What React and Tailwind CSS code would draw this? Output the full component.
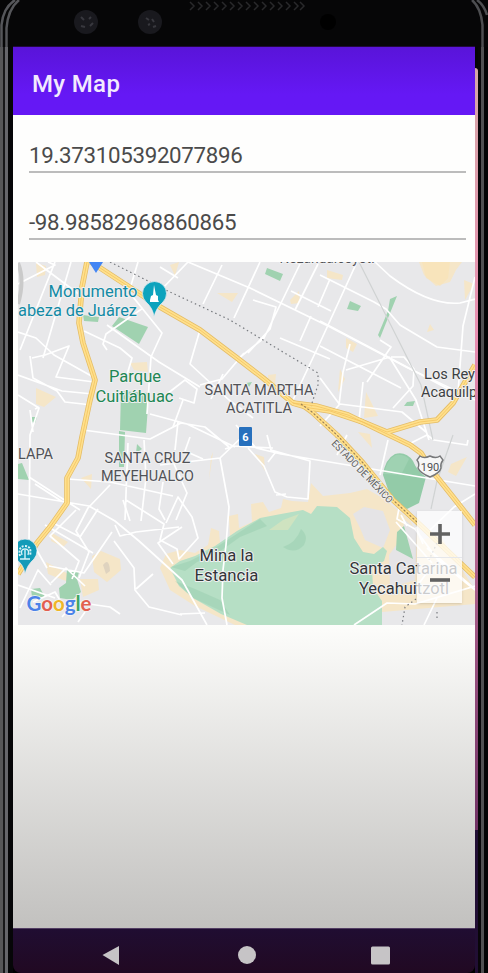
import React from "react";

const streets = [
  "M18 284L55 265L48 262M18 332L36 338L54 355L95 378M36 262L84 298M71 262L43 358M55 262L20 350M18 375L62 391L93 394M30 356L33 378L57 391L65 402L92 405M32 358L45 355L69 346L56 377L94 382",
  "M84 331L120 348L132 358L126 378M143 308L106 334L103 344L107 350M107 325L159 362L200 387M138 262L129 292L162 333L151 357L147 414M18 395L39 408L30 435L29 545M39 407L35 409M30 410L33 432",
  "M83 430L150 439L181 423L205 427L229 447M150 414L187 424L235 447M178 422L175 450M163 397L185 380L197 389L194 403L179 398",
  "M160 291L188 262M188 262L250 288L330 327L408 368L475 400M160 267L178 278M222 265L203 304M260 262L234 318M293 262L300 264L264 338L239 358M357 262L318 347L293 400M291 291L331 311M253 300L276 307L270 329L248 353M280 338L330 359",
  "M320 275L374 302L386 309L400 325L437 347L475 352M320 321L390 358L450 390M320 346L401 388M375 262L390 276Q430 306 460 303L475 299M475 277L463 326L458 393M320 378L340 405M320 426L339 405L343 372L350 344M380 340L391 347L367 382M391 357L404 357L414 369L413 386L393 408M390 358L416 400L429 440M346 370L390 357M340 404L402 412L426 432M363 382L359 421M330 279L318 307M311 316L300 341M318 264L295 310",
  "M183 400L173 427M200 330L190 364L229 400L253 418M223 374L211 399M244 353L222 379L200 385M225 449L234 446L273 448M236 425L256 448L281 454L475 486M245 434L220 458L160 465M220 458L229 507L226 545L223 570L222 598L227 625M267 435L271 450L310 461L308 499L287 497L275 492L264 466L248 448M275 453L268 462M286 494L276 495",
  "M18 494L89 506L115 521L139 541L182 580L207 625M35 484L66 504M29 477L80 510M67 479L110 482L173 496M128 443L125 520M126 500L164 524L160 540L177 549L179 559L198 538L192 517L178 497L166 523M110 485L88 508L76 531L89 552L79 578M98 509L80 537L53 523M112 532L84 573L49 566M115 525L120 536L136 532L179 527M114 541L134 568L135 590L149 607L182 615M136 589L153 574M20 608L38 570L51 585M51 583L66 568L85 586M35 547L47 568M45 525L93 553M76 510L50 536L79 561L72 579",
  "M123 500L130 521M144 440L146 478L141 521M163 482L159 509L165 520M190 437L185 451L203 459M174 464L187 493L176 520M182 527L158 543L173 564",
  "M347 435L337 455M388 440L380 475M393 435L409 444L427 435L434 440L467 445L468 440M475 494L454 507L430 530M400 503L397 519L415 529L438 560L475 590M416 527L423 544M354 625L387 603L415 604L475 586M401 515L407 526M396 522L432 563M427 548L475 589M437 598L424 625M433 564L413 592",
  "M180 614L205 613M62 617L75 602L110 607L120 614M33 602L55 592L65 609M78 622L85 612M18 585L55 598",
];

const mainRoads = [
  "M87 262L82 287L79 323L83 343L95 380L90 400L82 437L78 458L67 478L67 503L50 527L37 543L18 574",
  "M91 262L160 307L200 330L237 358L263 378L293 403L310 408L330 411L363 422L387 432L420 422L437 420L453 403L475 365",
  "M293 403L316 406L348 415L385 433L410 445L421 453L433 472L453 497L475 525",
  "M301 404L312 412L337 435L363 463L393 500L417 522L475 577",
];

function Label({ x, y, children, fill = "#505257", size = 14.8, length, anchor = "middle" }) {
  return (
    <text
      x={x}
      y={y}
      fill={fill}
      fontSize={size}
      textAnchor={anchor}
      textLength={length}
      lengthAdjust="spacingAndGlyphs"
      stroke="#f0f0f1"
      strokeWidth="2"
      strokeLinejoin="round"
      paintOrder="stroke"
    >
      {children}
    </text>
  );
}

function MapCanvas() {
  return (
    <svg
      viewBox="18 262 457 363"
      className="block h-[363px] w-[457px] font-['Roboto',sans-serif]"
      role="img"
    >
      <rect x="18" y="262" width="457" height="363" fill="#e8e8ea" />

      <g fill="#f5e6c8">
        <path d="M419 262L424 275L436 286L450 282L456 270L462 262Z" />
        <path d="M36 263L46 266L45 275L37 277ZM36 388L56 397L44 407L36 404ZM130 363L147 362L148 372L134 370ZM217 293L238 293L232 302ZM290 300L299 291L300 303L291 304ZM346 338L357 344L353 352L346 348ZM340 369L345 379L338 392ZM366 392L378 416L364 418ZM464 280L474 284L465 300ZM430 324L434 330L427 332ZM327 270L343 275L342 280L327 278ZM170 265L179 262L175 276ZM213 452L209 480L211 457ZM81 478L92 474L91 489ZM255 454L264 457L265 471ZM268 375L276 374L275 384L268 384ZM358 432L370 434L372 448ZM451 464L467 457L456 476L448 472Z" />
        <path d="M160 568L166 554L180 550L195 553L208 545L211 528L219 531L220 543L230 539L229 516L238 514L239 528L252 522L251 504L263 502L269 512L281 508L283 499L292 501L308 502L311 483L323 496L350 493L367 489L384 499L410 520L420 540L440 535L475 590V604L382 612V625H235L195 606L170 590Z" />
        <path d="M92 556L101 551L120 559L121 570L107 582L94 572ZM80 579L98 579L99 590L83 597ZM46 562L74 577L71 583L48 574ZM52 533L68 542L63 547L51 541Z" />
      </g>
      <path d="M353 514L364 507L383 511L390 530L383 548L365 540L360 528ZM405 520L417 530L415 580L390 588L389 555L400 540Z" fill="#e5e4e6" />
      <path d="M103 565Q109 557 110 571L106 574" fill="#dfd3bf" />
      <path d="M422 262L450 262L448 278L440 286L426 278Z" fill="#fae3b3" opacity="0.6" />

      <path
        d="M170 568L180 561L195 556L215 546L237 531L260 518L281 514L303 510L311 514L317 506L337 507L350 518L354 538L363 552L374 554L383 547L387 551L384 561L372 568L373 588L382 601L382 625H247L221 614L193 598L179 586Z"
        fill="#b6dfc5"
      />
      <g fill="#9acfb0" opacity="0.5">
        <path d="M171 567L190 561L215 548L260 519L267 526L240 537L219 552L197 562L185 571Z" />
        <path d="M283 547Q296 543 301 529Q309 536 304 545Q295 555 283 547Z" />
        <path d="M175 581L195 589L220 600L230 615L193 598Z" />
      </g>
      <path d="M269 530L283 520L299 514L288 530Z" fill="#cfe3c0" />
      <path d="M383 475Q385 459 395 454Q406 451 413 461Q417 471 426 477L419 503L407 509L391 498Z" fill="#93cba8" />
      <path d="M384 474Q387 459 396 455Q404 454 409 459L401 475Z" fill="#9fd2b2" />
      <g fill="#a0d2b0">
        <path d="M119 317L148 327L139 344L112 326Z" />
        <path d="M121 391L149 393L146 433L120 430ZM119 431L125 432L124 467H119Z" />
        <path d="M267 268L283 274L280 281L265 274ZM83 315L99 317L98 322L84 321Z" />
        <path d="M350 301L361 306L358 311L347 309ZM390 299L397 296L386 323L380 338L378 335L388 311ZM407 402L415 401L413 406L404 406ZM397 532L404 526L413 559L396 550ZM18 464L22 463L29 480L18 479ZM67 569L79 572L77 579L81 592L72 600L60 598L59 588L66 583ZM31 589L40 588L45 597L32 597ZM32 417L37 417L35 423L31 422ZM137 444L142 449L136 453ZM246 383L252 382L249 387Z" />
      </g>

      <g fill="none" stroke="#fff" strokeWidth="1.7" strokeLinejoin="round">
        {streets.map((path, index) => <path key={index} d={path} />)}
      </g>
      <path d="M359 262L421 385L433 440M453 435L437 481L431 509" stroke="#d0d3d3" strokeWidth="1.2" fill="none" />

      <g fill="none" strokeLinejoin="round">
        {mainRoads.map((path) => <path key={path} d={path} stroke="#e5bd66" strokeWidth="5.6" />)}
        {mainRoads.map((path) => <path key={path} d={path} stroke="#ffe08d" strokeWidth="4" />)}
        {mainRoads.map((path) => <path key={path} d={path} stroke="#f2c45f" strokeWidth="0.8" />)}
        <path d="M301 404L312 412L337 435L363 463L393 500L417 522" stroke="#9b8358" strokeWidth="1.2" strokeDasharray="2 2" />
        <path
          d="M110 262L170 292L230 320L283 352L318 373L318 385L311 406M437 543L429 560M416 599L405 607L402 625M437 612L437 620"
          stroke="#777a7f"
          strokeWidth="1.2"
          strokeDasharray="1.5 3"
        />
      </g>

      <path d="M89 262H103L96 273Z" fill="#4285f4" />
      <path d="M18 263Q25 280 18 304" fill="none" stroke="#cacaca" strokeWidth="4" />
      <g stroke="#eceef0" strokeWidth="0.7">
        <path d="M154 317Q153 308 146 302A12 12 0 1 1 163 302Q156 308 154 317Z" fill="#0ca3bd" />
        <path d="M25 574Q24 565 16 559A12 12 0 1 1 34 559Q27 565 25 574Z" fill="#129bb8" />
      </g>
      <path d="M154 285L156 295L158 296V300L159 302H150V300L151 296L153 295Z" fill="#fff" />
      <g fill="none" stroke="#d9f3f8">
        <path d="M20 556Q18 546 25 546Q32 546 30 556" strokeWidth="2" strokeDasharray="2 1.3" />
        <path d="M22 555Q20 549 25 549Q30 549 28 555M25 550V559M20 559H30" strokeWidth="1.4" />
      </g>

      <Label x={93} y={297} fill="#128aa5" size={17} length={89}>Monumento</Label>
      <Label x={137} y={316} fill="#128aa5" size={17} length={119} anchor="end">abeza de Juárez</Label>
      <Label x={135} y={382} fill="#208653" size={17} length={52}>Parque</Label>
      <Label x={134.5} y={402} fill="#208653" size={17} length={78}>Cuitláhuac</Label>
      <Label x={259} y={395} length={109}>SANTA MARTHA</Label>
      <Label x={259} y={412.5} length={66}>ACATITLA</Label>
      <Label x={35.5} y={459} length={35}>LAPA</Label>
      <Label x={147.5} y={463} length={86}>SANTA CRUZ</Label>
      <Label x={147.5} y={480.5} length={93}>MEYEHUALCO</Label>
      <Label x={226.5} y={561} size={17} fill="#333538" length={54}>Mina la</Label>
      <Label x={226.5} y={580.5} size={17} fill="#333538" length={64}>Estancia</Label>
      <Label x={424} y={379} size={15.5} fill="#3c3f43" length={51} anchor="start">Los Rey</Label>
      <Label x={421} y={396.5} size={15.5} fill="#3c3f43" length={56} anchor="start">Acaquilp</Label>
      <Label x={403.5} y={574} size={17} fill="#333538" length={108}>Santa Catarina</Label>
      <Label x={404} y={594} size={17} fill="#333538" length={90}>Yecahuitzotl</Label>
      <Label x={327} y={263} size={14} length={95}>Nezahualcóyotl</Label>
      <g transform="translate(331 444) rotate(46)">
        <text fontSize="10" fill="#5e5e60" stroke="#eee" strokeWidth="2" paintOrder="stroke" textLength="83" lengthAdjust="spacingAndGlyphs">ESTADO DE MÉXICO</text>
      </g>

      <rect x="239" y="427" width="13" height="19" rx="1" fill="#2770bd" />
      <text x="245.5" y="441" textAnchor="middle" fontSize="11" fontWeight="700" fill="#fff">6</text>
      <path d="M420 456Q424 459 430 456Q436 459 440 456L443 460Q440 464 441 468Q440 473 430 477Q420 473 418 468Q420 464 417 460Z" fill="#f7f7f7" stroke="#77787a" strokeWidth="1.4" />
      <text x="430" y="470.5" textAnchor="middle" fontSize="11" fill="#4f5052">190</text>

      <text x="26.5" y="610.5" fontSize="21" fontWeight="700" textLength="65" lengthAdjust="spacingAndGlyphs" className="font-['Lato',sans-serif]" stroke="#f5f5f5" strokeWidth="1.5" paintOrder="stroke">
        <tspan fill="#4c83e8">G</tspan>
        <tspan fill="#e2604f">o</tspan>
        <tspan fill="#efb629">o</tspan>
        <tspan fill="#4c83e8">g</tspan>
        <tspan fill="#42a665">l</tspan>
        <tspan fill="#e2604f">e</tspan>
      </text>
    </svg>
  );
}

function ZoomControls() {
  return (
    <div className="absolute right-[13px] bottom-[22px] flex h-[92px] w-[45px] flex-col bg-white/75 shadow">
      <button aria-label="Zoom in" className="flex flex-1 items-center justify-center border-b border-gray-200">
        <svg className="size-5" viewBox="0 0 20 20" fill="none" stroke="#626262" strokeWidth="3.6"><path d="M0 10H20M10 0V20" /></svg>
      </button>
      <button aria-label="Zoom out" className="flex flex-1 items-center justify-center">
        <svg className="size-5" viewBox="0 0 20 20" fill="none" stroke="#626262" strokeWidth="3.6"><path d="M0 10H20" /></svg>
      </button>
    </div>
  );
}

function PhoneTop() {
  return (
    <svg viewBox="0 0 488 47" className="block h-[47px] w-[488px] shrink-0">
      <rect width="488" height="47" fill="#060607" />
      <path d="M1.5 47V25Q3 8 15 0M6.5 47V28Q8 9 19 0" fill="none" stroke="#55565a" strokeWidth="2.5" />
      <path d="M487 15Q484 5 477 0M482.5 47V25Q481 8 472 0" fill="none" stroke="#4d4e51" strokeWidth="2.5" />
      <g fill="#19191e">
        <circle cx="86" cy="22" r="12" />
        <circle cx="150" cy="22" r="12" />
      </g>
      <path d="M81 17L84 20M91 17L89 19M81 26L85 27M90 26L93 23M146 18L149 20M152 19L154 22M148 25L150 24M153 27L156 26" stroke="#38383e" strokeWidth="2" fill="none" />
      <path d="M190 2L194 6L190 10M198 2L202 6L198 10M206 2L210 6L206 10M214 2L218 6L214 10M222 2L226 6L222 10M230 2L234 6L230 10M238 2L242 6L238 10M246 2L250 6L246 10M254 2L258 6L254 10M262 2L266 6L262 10M270 2L274 6L270 10M278 2L282 6L278 10M286 2L290 6L286 10M294 2L298 6L294 10M300 2L304 6L300 10" fill="none" stroke="#29292b" strokeWidth="1.5" />
      <circle cx="328" cy="22" r="8" fill="#000" />
      <path d="M13 46.5H475" stroke="#21083e" />
    </svg>
  );
}

export default function App() {
  return (
    <main className="flex h-[973px] w-[488px] flex-col overflow-hidden bg-black font-['Roboto',sans-serif]">
      <PhoneTop />
      <div className="flex min-h-0 flex-1">
        <div className="flex w-[13px] shrink-0">
          <div className="w-[3px] bg-[#565658]" />
          <div className="w-[2px] bg-[#171719]" />
          <div className="w-[3px] bg-[#66666b]" />
          <div className="w-[5px] bg-[#060608]" />
        </div>
        <div className="flex w-[462px] shrink-0 flex-col">
          <header className="flex h-[68px] shrink-0 items-center bg-linear-to-b from-[#5914d9] to-[#6518f5] to-70% pt-1.5 pl-[19px]">
            <h1 className="text-[24px] leading-8 font-medium tracking-[0.35px] text-[#f2eafe]">My Map</h1>
          </header>
          <section className="flex h-[147px] shrink-0 flex-col bg-[#fefefd] pr-[9px] pl-4 text-[22.3px] leading-8 tracking-[-0.3px] text-[#4b4b4b]">
            <div className="flex h-[58px] items-end border-b-2 border-[#bcbcbc]">19.373105392077896</div>
            <div className="flex h-[67px] items-end border-b-2 border-[#bcbcbc]">-98.98582968860865</div>
          </section>
          <section className="relative h-[363px] shrink-0 overflow-hidden bg-[#fefefd] pl-[5px]">
            <MapCanvas />
            <ZoomControls />
          </section>
          <div className="h-[303px] shrink-0 bg-linear-to-b from-[#fdfdfb] to-[#c2c1bf]" />
          <nav className="flex min-h-0 flex-1 rounded-b-lg border-t border-[#513d62] bg-linear-to-b from-[#200d32] to-[#210922]">
            <svg className="h-11 w-[462px]" viewBox="13 929 462 44" fill="#c6c4c6">
              <path d="M102.5 955L119 946V965Z" />
              <circle cx="247" cy="955" r="9" />
              <rect x="371" y="946.5" width="19" height="18" rx="1.5" />
            </svg>
          </nav>
        </div>
        <div className="flex w-[3px] shrink-0 flex-col">
          <div className="h-[21px] bg-[#050506]" />
          <div className="h-[762px] rounded-tr-sm bg-linear-to-b from-[#d5a7a8] via-[#e88eb1] via-35% to-[#713265]" />
          <div className="flex-1 bg-[#210e34]" />
        </div>
        <div className="flex flex-1">
          <div className="w-[3px] bg-[#080609]" />
          <div className="w-[3px] bg-[#505052]" />
          <div className="flex-1 bg-[#040405]" />
        </div>
      </div>
    </main>
  );
}
